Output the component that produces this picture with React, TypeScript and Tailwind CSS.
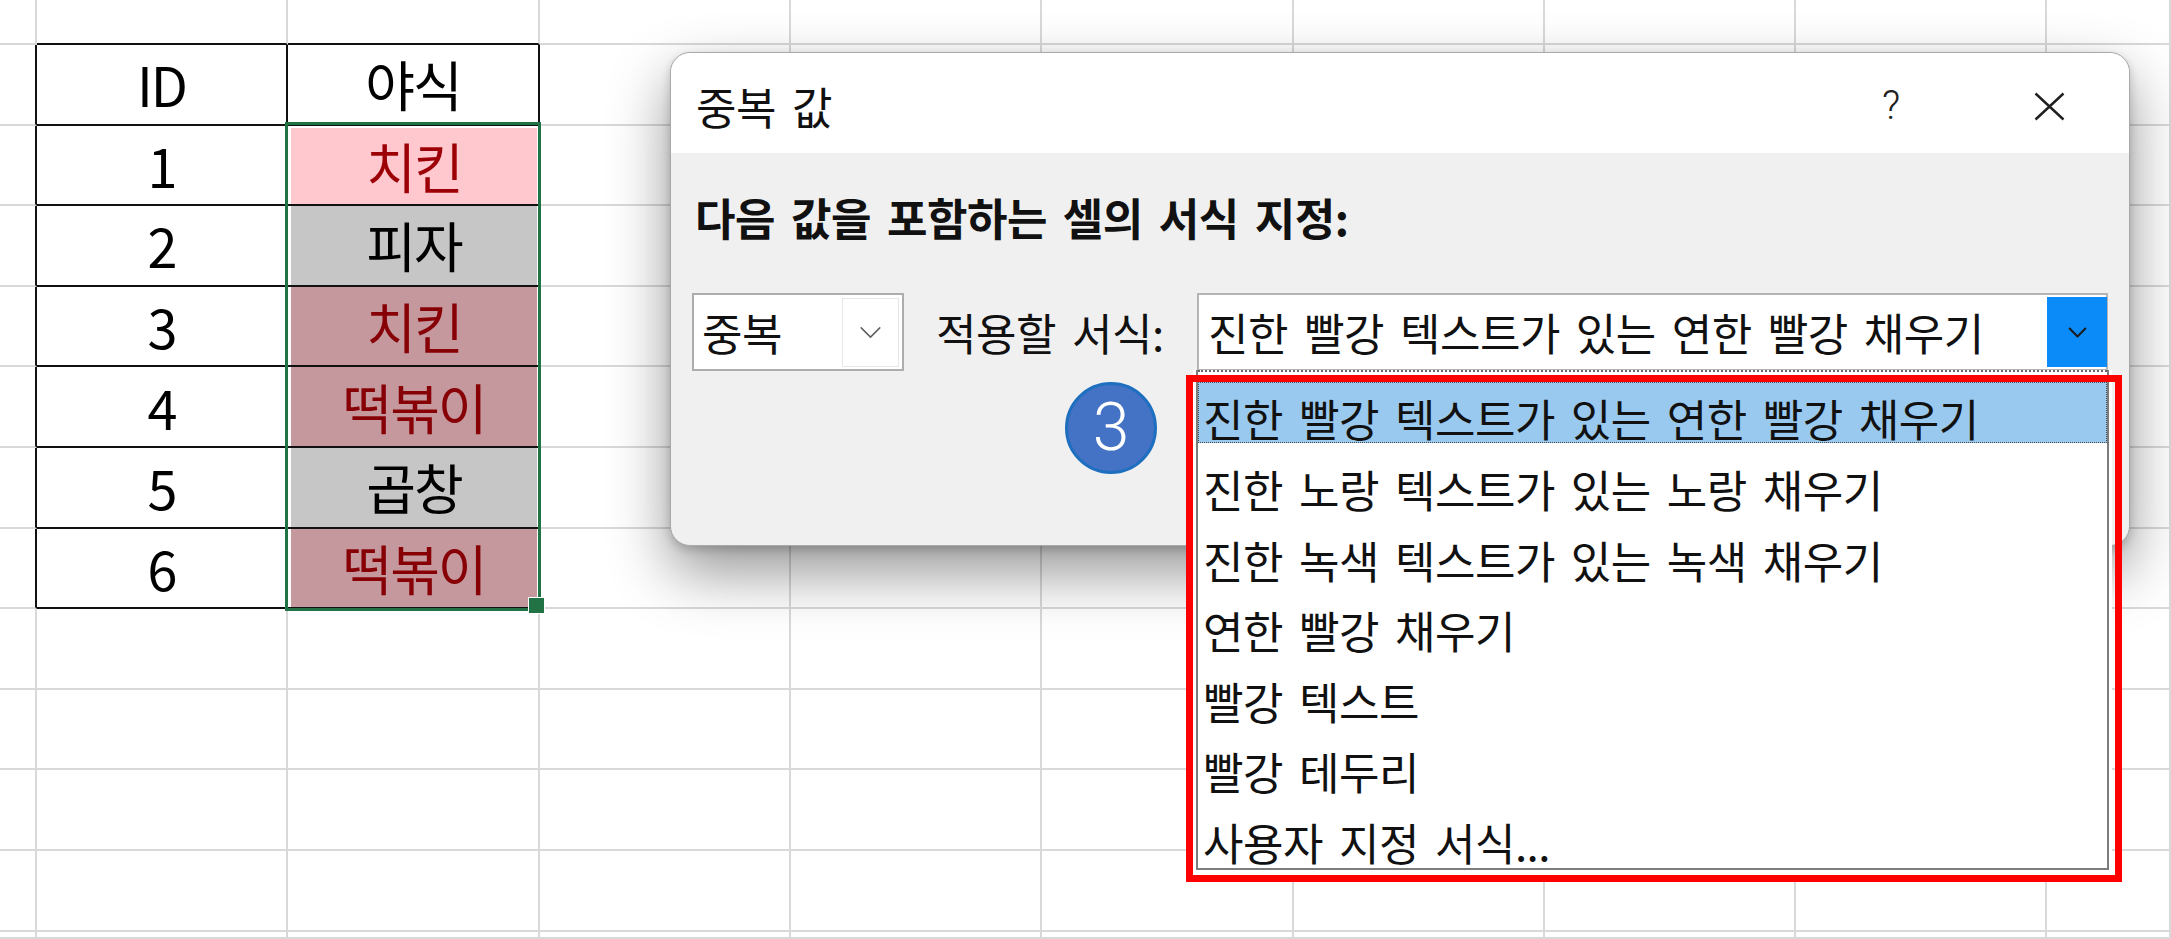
import React from "react";

type Fill = "pink" | "dpink" | "gray";

const dataRows: { id: string; food: string; fill: Fill }[] = [
  { id: "1", food: "치킨", fill: "pink" },
  { id: "2", food: "피자", fill: "gray" },
  { id: "3", food: "치킨", fill: "dpink" },
  { id: "4", food: "떡볶이", fill: "dpink" },
  { id: "5", food: "곱창", fill: "gray" },
  { id: "6", food: "떡볶이", fill: "dpink" },
];

const listItems = [
  "진한 노랑 텍스트가 있는 노랑 채우기",
  "진한 녹색 텍스트가 있는 녹색 채우기",
  "연한 빨강 채우기",
  "빨강 텍스트",
  "빨강 테두리",
  "사용자 지정 서식...",
];

function fillClass(f: Fill) {
  if (f === "pink") return "bg-[#ffc7ce] text-[#9c0006]";
  if (f === "dpink") return "bg-[#c4989c] text-[#860006]";
  return "bg-[#c6c6c6] text-black";
}

/* Renders text with a fixed-width gap in place of each space */
function Words({ text }: { text: string }) {
  const parts = text.split(" ");
  return (
    <span className="whitespace-nowrap">
      {parts.map((p, i) => (
        <React.Fragment key={i}>
          {i > 0 && <span className="inline-block w-[16px]" />}
          {p}
        </React.Fragment>
      ))}
    </span>
  );
}

function Sheet() {
  const cells: React.ReactNode[] = [];
  for (let r = 0; r < 13; r++) {
    for (let c = 0; c < 10; c++) {
      const rightBlack = r >= 1 && r <= 7 && c <= 2;
      const bottomBlack = (c === 1 || c === 2) && r <= 7;
      let content: React.ReactNode = null;
      if (r === 1 && c === 1) content = "ID";
      if (r === 1 && c === 2) content = "야식";
      if (r >= 2 && r <= 7 && c === 1) content = dataRows[r - 2].id;
      let inner: React.ReactNode = null;
      if (r >= 2 && r <= 7 && c === 2) {
        const d = dataRows[r - 2];
        inner = (
          <div
            className={
              "ml-[3px] mr-[1px] flex flex-1 items-center justify-center self-stretch " +
              (r === 2 ? "mt-[2.5px] " : "") +
              fillClass(d.fill)
            }
          >
            {d.food}
          </div>
        );
      }
      cells.push(
        <div
          key={r + "-" + c}
          className={
            "box-border flex items-center justify-center border-r-2 border-b-2 " +
            (rightBlack ? "border-r-[#111111] " : "border-r-[#d9d9d9] ") +
            (bottomBlack ? "border-b-[#111111]" : "border-b-[#d9d9d9]")
          }
        >
          {inner ? <div className="flex h-full w-full">{inner}</div> : content}
        </div>
      );
    }
  }
  return (
    <div className="grid h-full w-full grid-cols-[37px_251px_252px_251px_251px_252px_251px_251px_251px_1fr] grid-rows-[45px_repeat(11,80.6px)_1fr] font-['Noto_Sans_CJK_KR','Noto_Sans',sans-serif] text-[54px] leading-none tracking-[-2px] text-black">
      {cells}
    </div>
  );
}

function Chevron({ className, stroke, width }: { className?: string; stroke: string; width: number }) {
  return (
    <svg className={className} viewBox="0 0 24 14" fill="none">
      <path d="M2 2 L12 12 L22 2" stroke={stroke} strokeWidth={width} strokeLinecap="round" strokeLinejoin="round" />
    </svg>
  );
}

function Dialog() {
  return (
    <div className="absolute left-[670px] top-[52px] z-10 flex h-[494px] w-[1460px] flex-col rounded-[20px] border-[1.5px] border-[#a9a9a9] bg-[#f0f0f0] font-['Noto_Sans_CJK_KR','Noto_Sans',sans-serif] text-[44px] leading-[50px] tracking-[-0.5px] text-[#111] shadow-[0_26px_60px_rgba(0,0,0,0.42),0_4px_10px_rgba(0,0,0,0.18)]">
      {/* title bar */}
      <div className="flex h-[100px] items-center rounded-t-[20px] bg-white pl-[25px] pt-[6px]">
        <Words text="중복 값" />
        <div className="ml-auto flex items-center">
          <div className="w-[40px] text-center font-['Roboto','Noto_Sans',sans-serif] text-[40px] font-light tracking-normal text-[#222]">?</div>
          <div className="ml-[90px] flex w-[96px] items-center justify-center">
            <svg width="31" height="29" viewBox="0 0 31 29" fill="none">
              <path d="M1.5 1.5 L29.5 27.5 M29.5 1.5 L1.5 27.5" stroke="#1f1f1f" strokeWidth="2.4" />
            </svg>
          </div>
          <div className="w-[32px]" />
        </div>
      </div>
      {/* body */}
      <div className="flex flex-1 flex-col rounded-b-[20px] px-[21px] pt-[38.5px]">
        <div className="pl-[3px] font-bold">
          <Words text="다음 값을 포함하는 셀의 서식 지정:" />
        </div>
        <div className="mt-[51.5px] flex h-[78px] items-stretch">
          {/* first combo */}
          <div className="box-border flex h-[78px] w-[212px] items-center border-2 border-[#adadad] bg-white">
            <span className="pl-[8px]">중복</span>
            <div className="ml-auto mr-[3px] flex h-[69px] w-[57px] items-center justify-center border border-[#e6e6e6] bg-white">
              <Chevron className="h-[13px] w-[23px]" stroke="#5f5f5f" width={1.6} />
            </div>
          </div>
          <div className="flex w-[293px] items-center pl-[32px]">
            <Words text="적용할 서식:" />
          </div>
          {/* second combo */}
          <div className="relative box-border flex h-[78px] w-[911px] items-center border-2 border-[#b4b4b4] bg-white">
            <span className="flex-1 pl-[9px]">
              <Words text="진한 빨강 텍스트가 있는 연한 빨강 채우기" />
            </span>
            <div className="mr-[-1px] flex h-[70px] w-[60px] items-center justify-center bg-[#0b8bf8]">
              <Chevron className="h-[11px] w-[23px]" stroke="#1b1b1b" width={2.6} />
            </div>
            {/* dropdown list */}
            <div className="absolute left-[-6px] right-[-6px] top-[75px] bg-white px-[3px] pb-[5px]">
              <div className="box-border flex h-[500px] flex-col border-x-2 border-b-2 border-[#7c7c7c] bg-white">
                <div className="h-[2px] border-t-2 border-dotted border-[#666]" />
                <div className="mt-[10px] box-border h-[61px] border border-dotted border-[#4a4a4a] bg-[#99c9ef] pl-[4px] pt-[10px] leading-[50px]">
                  <Words text="진한 빨강 텍스트가 있는 연한 빨강 채우기" />
                </div>
                <div className="mt-[21px] flex flex-col gap-[20.5px] pl-[5px]">
                  {listItems.map((t) => (
                    <div key={t} className="h-[50px] leading-[50px]">
                      <Words text={t} />
                    </div>
                  ))}
                </div>
              </div>
            </div>
          </div>
        </div>
      </div>
    </div>
  );
}

export default function App() {
  return (
    <div className="relative h-[939px] w-[2171px] overflow-hidden bg-white">
      <Sheet />
      {/* selection border */}
      <div className="pointer-events-none absolute left-[285px] top-[122px] h-[489px] w-[256px] border-[3px] border-[#217346]" />
      <div className="absolute left-[528px] top-[597px] h-[17px] w-[17px] border-[1.5px] border-white bg-[#217346]" />
      <Dialog />
      {/* step badge */}
      <div className="absolute left-[1065px] top-[382px] z-20 flex h-[92px] w-[92px] items-center justify-center rounded-full border-[3px] border-[#1f6fc0] bg-[#4472c4] font-['Roboto','Noto_Sans',sans-serif] text-[66px] font-light leading-none text-white">
        3
      </div>
      {/* red highlight box */}
      <div className="pointer-events-none absolute left-[1186px] top-[375px] z-20 h-[507px] w-[936px] border-[7px] border-[#ff0000]" />
    </div>
  );
}
